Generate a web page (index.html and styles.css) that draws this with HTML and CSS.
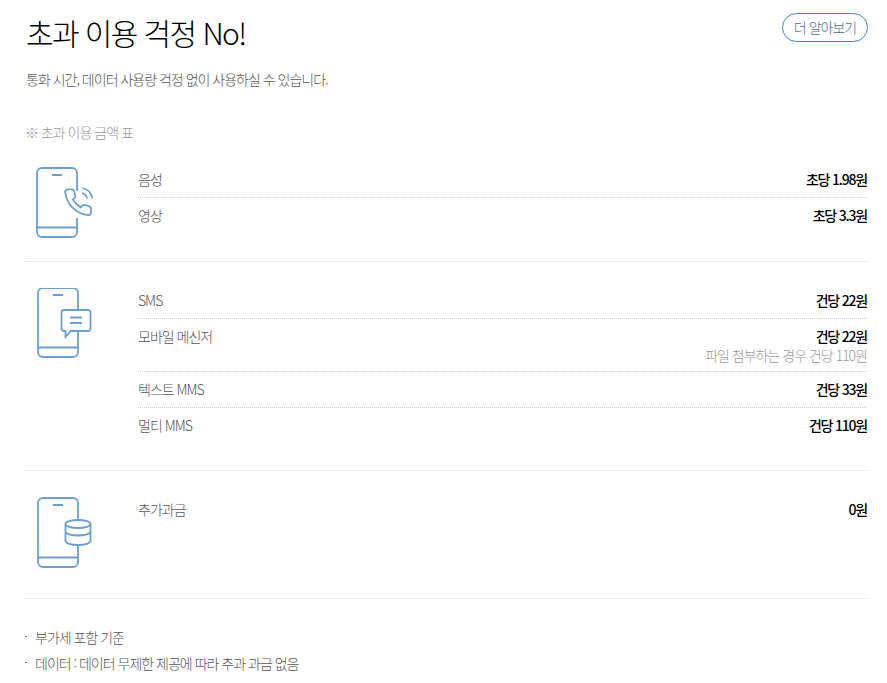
FILE: index.html
```
<!DOCTYPE html>
<html lang="ko">
<head>
<meta charset="utf-8">
<title>초과 이용 걱정 No!</title>
<link rel="stylesheet" href="styles.css">
</head>
<body>
<main class="page">
  <header class="head">
    <h1 class="title">초과 이용 걱정 No!</h1>
    <a class="more" href="#">더 알아보기</a>
  </header>
  <p class="desc">통화 시간, 데이터 사용량 걱정 없이 사용하실 수 있습니다.</p>
  <p class="note">※ 초과 이용 금액 표</p>

  <section class="group">
    <svg class="icon" width="60" height="72" viewBox="0 0 60 72" fill="none" stroke="#6a9fd3" stroke-width="1.8">
      <path d="M41 24V6a5 5 0 0 0-5-5H6a5 5 0 0 0-5 5v59a5 5 0 0 0 5 5h30a5 5 0 0 0 5-5V51"/>
      <path d="M1 60.500h40M16 8h10"/>
      <g transform="translate(26.4 19.7) scale(1.3)" stroke-width="1.35">
        <path d="M22 16.92v3a2 2 0 0 1-2.18 2 19.79 19.79 0 0 1-8.63-3.07 19.5 19.5 0 0 1-6-6 19.79 19.79 0 0 1-3.07-8.67A2 2 0 0 1 4.11 2h3a2 2 0 0 1 2 1.72 12.84 12.84 0 0 0 .7 2.81 2 2 0 0 1-.45 2.11L8.09 9.91a16 16 0 0 0 6 6l1.27-1.27a2 2 0 0 1 2.11-.45 12.84 12.84 0 0 0 2.81.7A2 2 0 0 1 22 16.92z"/>
        <path d="M15.05 5A5 5 0 0 1 19 8.95M15.05 1A9 9 0 0 1 23 8.94"/>
      </g>
    </svg>
    <ul class="rows">
      <li class="row"><span class="label">음성</span><span class="value"><b>초당 1.98원</b></span></li>
      <li class="row"><span class="label">영상</span><span class="value"><b>초당 3.3원</b></span></li>
    </ul>
  </section>

  <section class="group">
    <svg class="icon" width="60" height="72" viewBox="0 1 60 72" fill="none" stroke="#6a9fd3" stroke-width="1.8">
      <path d="M42 23V6a5 5 0 0 0-5-5H7a5 5 0 0 0-5 5v59a5 5 0 0 0 5 5h30a5 5 0 0 0 5-5V45"/>
      <path d="M2 60.500h40M17 8h10"/>
      <path d="M28 23h24a2.500 2.500 0 0 1 2.500 2.500v16a2.500 2.500 0 0 1-2.500 2.500H35l-5.500 6v-6H28a2.500 2.500 0 0 1-2.500-2.500v-16A2.500 2.500 0 0 1 28 23z"/>
      <path d="M34 30.500h12M34 36h12"/>
    </svg>
    <ul class="rows">
      <li class="row"><span class="label">SMS</span><span class="value"><b>건당 22원</b></span></li>
      <li class="row"><span class="label">모바일 메신저</span><span class="value"><b>건당 22원</b><small>파일 첨부하는 경우 건당 110원</small></span></li>
      <li class="row"><span class="label">텍스트 MMS</span><span class="value"><b>건당 33원</b></span></li>
      <li class="row"><span class="label">멀티 MMS</span><span class="value"><b>건당 110원</b></span></li>
    </ul>
  </section>

  <section class="group group-last">
    <svg class="icon" width="60" height="72" viewBox="0 0 60 72" fill="none" stroke="#6a9fd3" stroke-width="1.8">
      <path d="M42 23V6a5 5 0 0 0-5-5H7a5 5 0 0 0-5 5v59a5 5 0 0 0 5 5h30a5 5 0 0 0 5-5V48"/>
      <path d="M2 60.500h40M17 8h10"/>
      <ellipse cx="42" cy="27" rx="12.500" ry="4"/>
      <path d="M29.500 27v17c0 2.200 5.600 4 12.500 4s12.500-1.800 12.500-4V27M29.500 34.500c0 2.200 5.600 4 12.500 4s12.500-1.800 12.500-4"/>
    </svg>
    <ul class="rows">
      <li class="row"><span class="label">추가과금</span><span class="value"><b>0원</b></span></li>
    </ul>
  </section>

  <ul class="foot">
    <li>부가세 포함 기준</li>
    <li>데이터 : 데이터 무제한 제공에 따라 추과 과금 없음</li>
  </ul>
</main>
</body>
</html>
```

FILE: styles.css
```
* { box-sizing: border-box; }
html, body { margin: 0; padding: 0; background: #fff; }
body {
  font-family: "Noto Sans CJK KR", "Noto Sans", sans-serif;
  font-weight: 300;
  color: #555;
  overflow: hidden;
}
.page { padding: 0 20px 0 25px; }
.head {
  display: flex;
  justify-content: space-between;
  align-items: flex-start;
  padding-top: 13px;
}
.title {
  margin: -1px 0 0 1px;
  font-size: 30px;
  line-height: 40px;
  font-weight: 300;
  letter-spacing: -1.6px;
  color: #000;
}
.more {
  display: block;
  width: 86px;
  height: 29px;
  margin-right: -1px;
  border: 1px solid #3d8bb0;
  border-radius: 15px;
  font-size: 14px;
  line-height: 26px;
  text-align: center;
  letter-spacing: -1px;
  color: #4a6f8a;
  text-decoration: none;
}
.desc {
  margin: 16px 0 0 1px;
  font-size: 14px;
  line-height: 22px;
  letter-spacing: -1px;
  color: #555;
}
.note {
  margin: 34px 0 1px;
  font-size: 14px;
  line-height: 16px;
  letter-spacing: -1px;
  color: #999;
}
.group {
  display: flex;
  align-items: flex-start;
  padding: 21px 0 22px;
  border-bottom: 1px solid #eaeaea;
}
.group-last { padding-bottom: 29px; }
.icon { flex: none; margin: 5px 42px 0 11px; }
.rows {
  flex: 1;
  margin: 0;
  padding: 0 0 5px;
  list-style: none;
}
.row {
  display: flex;
  justify-content: space-between;
  padding: 6px 0 7px;
  border-bottom: 1px dotted #d0d0d0;
  font-size: 14px;
  line-height: 22px;
  letter-spacing: -1px;
}
.row:last-child { border-bottom: 0; }
.label { color: #555; }
.value { display: flex; flex-direction: column; align-items: flex-end; }
.value b { font-weight: 500; color: #000; line-height: 22px; letter-spacing: -1.2px; }
.value small { font-size: 14px; line-height: 16px; margin-bottom: 1px; color: #999; }
.foot {
  margin: 25px 0 0;
  padding: 0;
  list-style: none;
  font-size: 14px;
  letter-spacing: -1px;
  color: #555;
}
.foot li {
  position: relative;
  padding-left: 10px;
  line-height: 26px;
}
.foot li::before {
  content: "";
  position: absolute;
  left: 0;
  top: 12px;
  width: 2px;
  height: 1px;
  background: #777;
}
```
